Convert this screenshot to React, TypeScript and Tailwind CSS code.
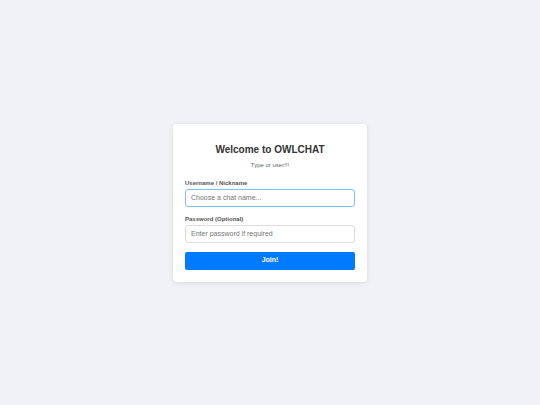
import { useState } from 'react';

export default function App() {
  const [name, setName] = useState('');
  const [password, setPassword] = useState('');

  return (
    <div
      className="flex min-h-screen w-full items-center justify-center bg-[#f0f2f5]"
      style={{ fontFamily: '"Liberation Sans", Arial, sans-serif' }}
    >
      {/* Join card */}
      <div className="flex w-[194px] flex-col rounded-[4px] bg-white px-3 pb-3 pt-[20px] shadow-[0_1px_5px_rgba(0,0,0,0.1)]">
        <h2 className="text-center text-[10px] font-bold leading-[12px] text-[#333]">
          Welcome to OWLCHAT
        </h2>
        <p className="mt-[5px] text-center text-[6px] leading-[8px] text-[#666]">Type ur user!!!</p>

        <label className="mt-[10px] text-[6px] font-bold leading-[8px] text-[#555]">
          Username / Nickname
        </label>
        <input
          autoFocus
          value={name}
          onChange={(e) => setName(e.target.value)}
          placeholder="Choose a chat name..."
          className="mt-[2px] h-[18px] w-full rounded-[3px] border border-[#80bdff] px-[5px] text-[7px] text-[#333] outline-none placeholder:text-[#757575]"
        />

        <label className="mt-[8px] text-[6px] font-bold leading-[8px] text-[#555]">
          Password (Optional)
        </label>
        <input
          type="password"
          value={password}
          onChange={(e) => setPassword(e.target.value)}
          placeholder="Enter password if required"
          className="mt-[2px] h-[18px] w-full rounded-[3px] border border-[#ddd] px-[5px] text-[7px] text-[#333] outline-none placeholder:text-[#757575]"
        />

        <button
          type="button"
          className="mt-[9px] h-[18px] w-full rounded-[2px] bg-[#007bff] text-[7px] font-bold text-white"
        >
          Join!
        </button>
      </div>
    </div>
  );
}
